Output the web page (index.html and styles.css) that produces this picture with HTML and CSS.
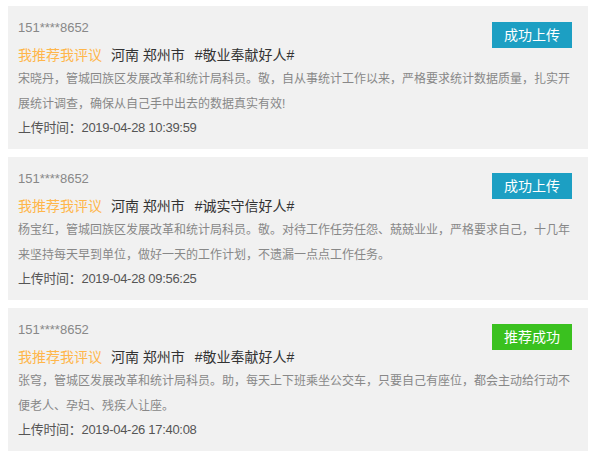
FILE: index.html
```html
<!DOCTYPE html>
<html lang="zh-CN">
<head>
  <meta charset="UTF-8">
  <title>我的推荐</title>
  <link rel="stylesheet" href="styles.css">
</head>
<body>

  <div class="list">
    <div class="card">
      <span class="status uploaded">成功上传</span>
      <div class="phone">151****8652</div>
      <div class="tags">
        <span class="mine">我推荐我评议</span>
        <span class="area">河南 郑州市</span>
        <span class="topic">#敬业奉献好人#</span>
      </div>
      <p class="desc">宋晓丹，管城回族区发展改革和统计局科员。敬，自从事统计工作以来，严格要求统计数据质量，扎实开展统计调查，确保从自己手中出去的数据真实有效!</p>
      <div class="time">上传时间：2019-04-28 10:39:59</div>
    </div>

    <div class="card">
      <span class="status uploaded">成功上传</span>
      <div class="phone">151****8652</div>
      <div class="tags">
        <span class="mine">我推荐我评议</span>
        <span class="area">河南 郑州市</span>
        <span class="topic">#诚实守信好人#</span>
      </div>
      <p class="desc">杨宝红，管城回族区发展改革和统计局科员。敬。对待工作任劳任怨、兢兢业业，严格要求自己，十几年来坚持每天早到单位，做好一天的工作计划，不遗漏一点点工作任务。</p>
      <div class="time">上传时间：2019-04-28 09:56:25</div>
    </div>

    <div class="card">
      <span class="status recommended">推荐成功</span>
      <div class="phone">151****8652</div>
      <div class="tags">
        <span class="mine">我推荐我评议</span>
        <span class="area">河南 郑州市</span>
        <span class="topic">#敬业奉献好人#</span>
      </div>
      <p class="desc">张穹，管城区发展改革和统计局科员。助，每天上下班乘坐公交车，只要自己有座位，都会主动给行动不便老人、孕妇、残疾人让座。</p>
      <div class="time">上传时间：2019-04-26 17:40:08</div>
    </div>
  </div>

</body>
</html>
```

FILE: styles.css
```css
body {
  margin: 0;
  padding: 6px 5px 0 8px;
  background: #fff;
  font-family: "Liberation Sans", "Noto Sans CJK SC", sans-serif;
}
.list {
  display: flex;
  flex-direction: column;
  gap: 8px;
}
.card {
  background: #f1f1f1;
  padding: 10px 16px 10px 10px;
}
.status {
  float: right;
  width: 80px;
  height: 26px;
  line-height: 26px;
  margin-top: 6px;
  text-align: center;
  color: #fff;
  font-size: 14px;
}
.uploaded {
  background: #1c9fc3;
}
.recommended {
  background: #3ac11f;
}
.phone {
  font-size: 13px;
  line-height: 24px;
  color: #888;
}
.tags {
  margin-top: 3px;
  font-size: 14px;
  line-height: 24px;
  color: #333;
}
.mine {
  color: #ffb64a;
  margin-right: 5px;
}
.area {
  margin-right: 6px;
}
.desc {
  margin: 0;
  font-size: 12px;
  line-height: 25px;
  color: #888;
}
.time {
  font-size: 13px;
  line-height: 22px;
  letter-spacing: -0.3px;
  color: #555;
}
```
